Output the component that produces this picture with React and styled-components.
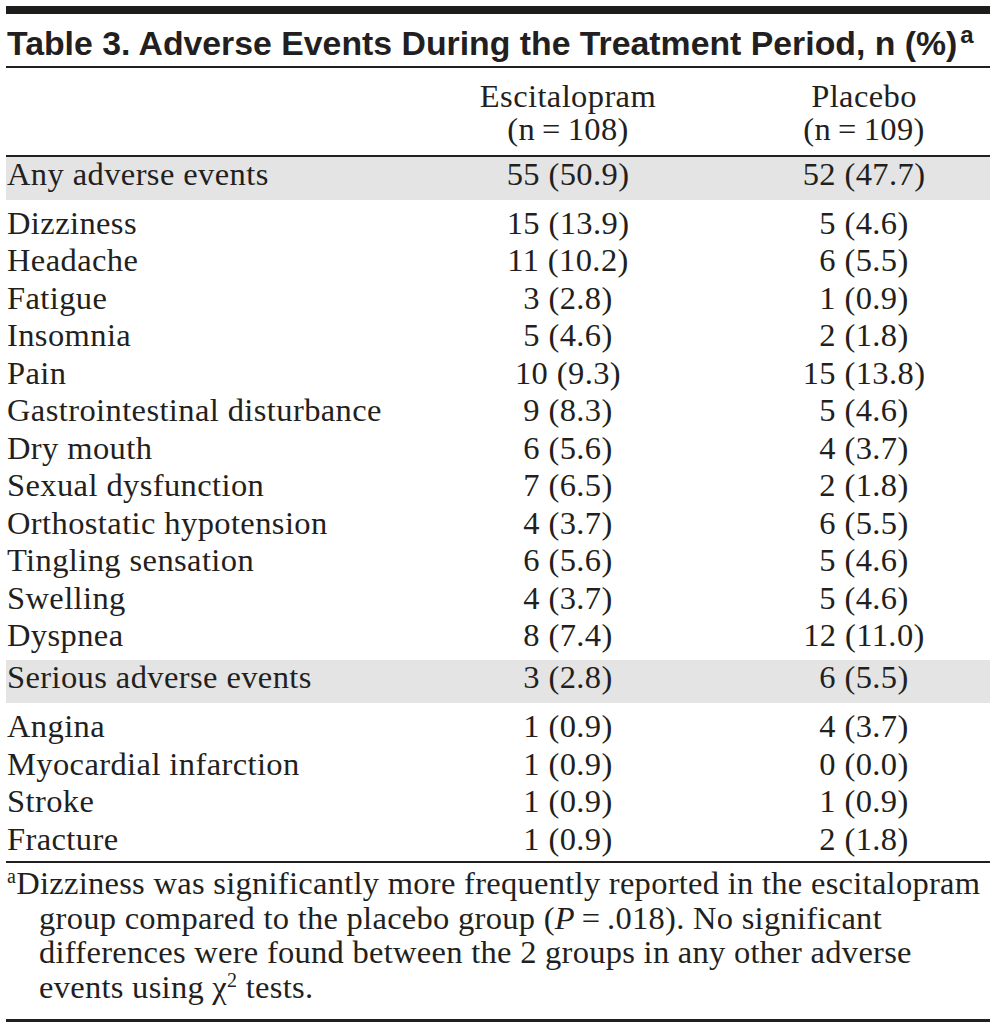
import React from "react";
import styled, { createGlobalStyle } from "styled-components";

const GlobalStyle = createGlobalStyle`
  body {
    margin: 0;
    background: #ffffff;
    color: #231f20;
    font-family: "Liberation Serif", "Times New Roman", serif;
  }
`;

const groups = [
  {
    title: ["Any adverse events", "55 (50.9)", "52 (47.7)"],
    rows: [
      ["Dizziness", "15 (13.9)", "5 (4.6)"],
      ["Headache", "11 (10.2)", "6 (5.5)"],
      ["Fatigue", "3 (2.8)", "1 (0.9)"],
      ["Insomnia", "5 (4.6)", "2 (1.8)"],
      ["Pain", "10 (9.3)", "15 (13.8)"],
      ["Gastrointestinal disturbance", "9 (8.3)", "5 (4.6)"],
      ["Dry mouth", "6 (5.6)", "4 (3.7)"],
      ["Sexual dysfunction", "7 (6.5)", "2 (1.8)"],
      ["Orthostatic hypotension", "4 (3.7)", "6 (5.5)"],
      ["Tingling sensation", "6 (5.6)", "5 (4.6)"],
      ["Swelling", "4 (3.7)", "5 (4.6)"],
      ["Dyspnea", "8 (7.4)", "12 (11.0)"],
    ],
  },
  {
    title: ["Serious adverse events", "3 (2.8)", "6 (5.5)"],
    rows: [
      ["Angina", "1 (0.9)", "4 (3.7)"],
      ["Myocardial infarction", "1 (0.9)", "0 (0.0)"],
      ["Stroke", "1 (0.9)", "1 (0.9)"],
      ["Fracture", "1 (0.9)", "2 (1.8)"],
    ],
  },
];

const App = () => {
  return (
    <>
      <GlobalStyle />
      <Page>
        <TopRule />
        <Title>
          Table 3. Adverse Events During the Treatment Period, n (%)
          <TitleSup>a</TitleSup>
        </Title>
        <HeadRow>
          <Cell />
          <ValueCell>
            Escitalopram
            <br />
            (n{"\u2009"}={"\u2009"}108)
          </ValueCell>
          <ValueCell>
            Placebo
            <br />
            (n{"\u2009"}={"\u2009"}109)
          </ValueCell>
        </HeadRow>
        {groups.map((g, gi) => (
          <React.Fragment key={gi}>
            <GrayRow>
              <Cell>{g.title[0]}</Cell>
              <ValueCell>{g.title[1]}</ValueCell>
              <ValueCell>{g.title[2]}</ValueCell>
            </GrayRow>
            <Group $last={gi === groups.length - 1}>
              {g.rows.map((r) => (
                <Row key={r[0]}>
                  <Cell>{r[0]}</Cell>
                  <ValueCell>{r[1]}</ValueCell>
                  <ValueCell>{r[2]}</ValueCell>
                </Row>
              ))}
            </Group>
          </React.Fragment>
        ))}
        <Footnote>
          <NoteSup>a</NoteSup>Dizziness was significantly more frequently
          reported in the escitalopram group compared to the placebo group (
          <i>P</i>
          {"\u2009"}={"\u2009"}.018). No significant differences were found
          between the 2 groups in any other adverse events using χ
          <NoteSup>2</NoteSup> tests.
        </Footnote>
      </Page>
    </>
  );
};

export default App;

const Page = styled.div`
  width: 984px;
  padding: 6px 9px 0 6px;
`;

const TopRule = styled.div`
  height: 8px;
  background: #1d1d1b;
`;

const Title = styled.div`
  margin-top: 9px;
  padding: 0 0 3px 1px;
  font-family: "Liberation Sans", Arial, sans-serif;
  font-weight: 700;
  font-size: 33.8px;
  line-height: 40px;
  white-space: nowrap;
  border-bottom: 2px solid #231f20;
`;

const TitleSup = styled.span`
  font-size: 24px;
  line-height: 0;
  vertical-align: 12px;
  margin-left: 3px;
`;

const grid = `
  display: grid;
  grid-template-columns: 392px 340px 252px;
  font-size: 32.5px;
  letter-spacing: 0.4px;
`;

const HeadRow = styled.div`
  ${grid}
  line-height: 33px;
  padding: 12px 0 9px;
  border-bottom: 2px solid #231f20;
`;

const GrayRow = styled.div`
  ${grid}
  background: #e4e4e4;
  line-height: 34px;
  padding-bottom: 9px;
`;

const Group = styled.div`
  padding: 5px 0 ${(p) => (p.$last ? "3px" : "6px")};
  border-bottom: ${(p) => (p.$last ? "2px solid #231f20" : "none")};
`;

const Row = styled.div`
  ${grid}
  line-height: 37.45px;
`;

const Cell = styled.div`
  padding-left: 1px;
  white-space: nowrap;
`;

const ValueCell = styled.div`
  text-align: center;
  white-space: nowrap;
`;

const Footnote = styled.div`
  font-size: 32.5px;
  letter-spacing: 0.28px;
  line-height: 34.5px;
  padding: 3px 0 15px 33px;
  text-indent: -32px;
  border-bottom: 3px solid #231f20;
`;

const NoteSup = styled.span`
  font-size: 20px;
  line-height: 0;
  vertical-align: 11px;
`;
